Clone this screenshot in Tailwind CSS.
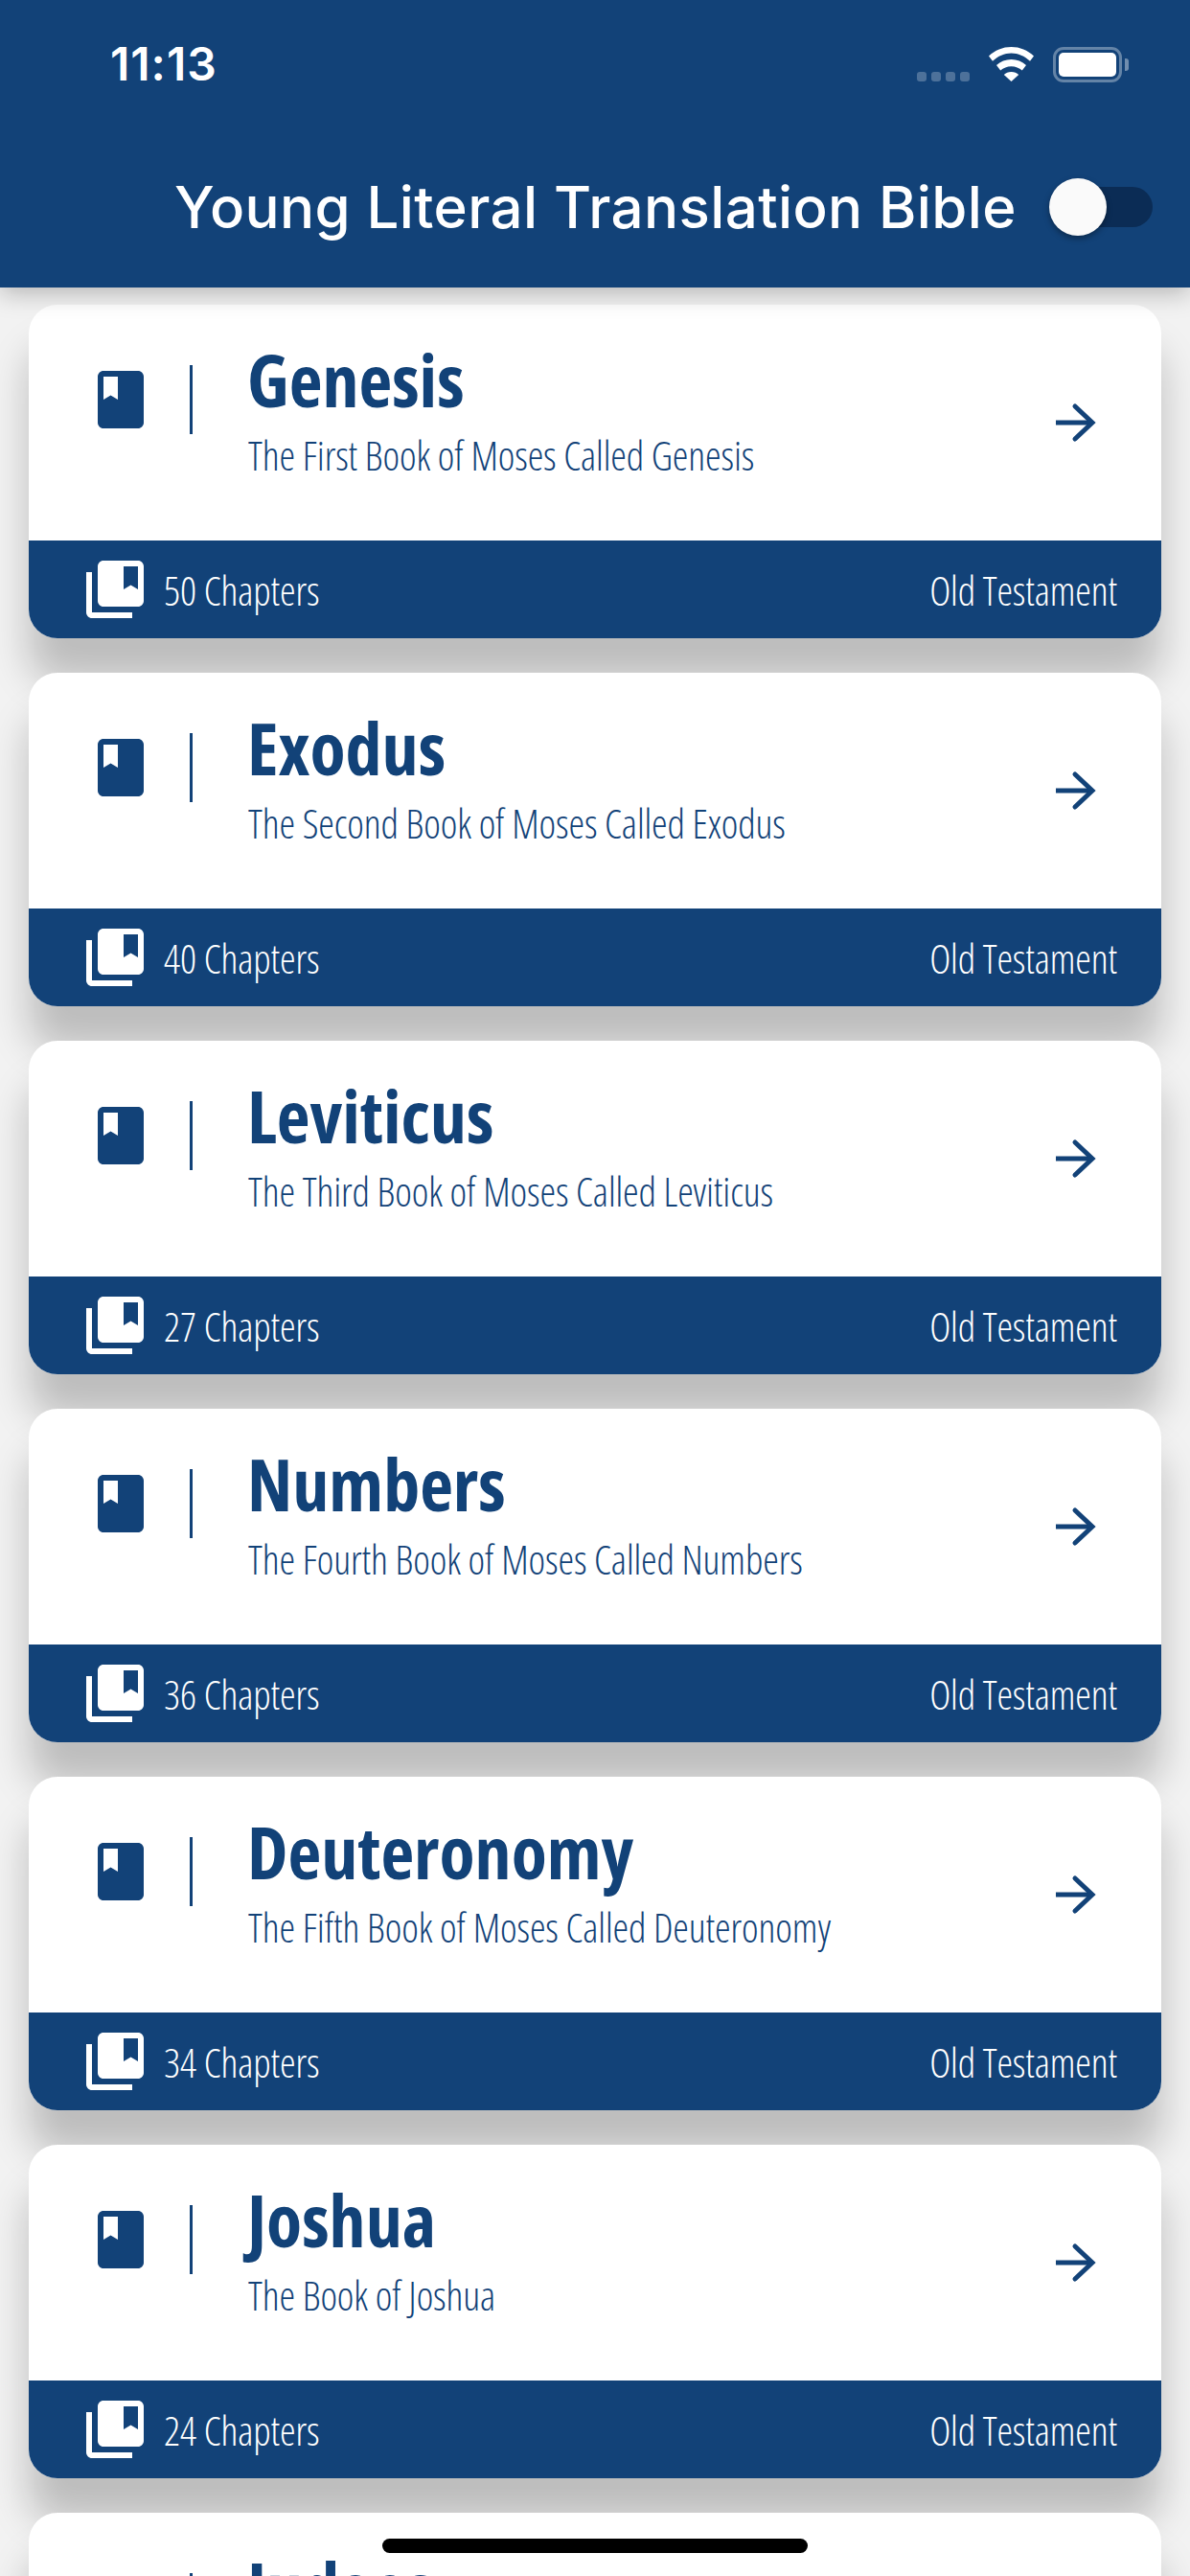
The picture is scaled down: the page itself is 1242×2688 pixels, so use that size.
<!DOCTYPE html>
<html lang="en">
<head>
    <meta charset="UTF-8">
    <meta name="viewport" content="width=device-width, initial-scale=1.0">
    <title>Young Literal Translation Bible</title>
    <script src="https://cdn.jsdelivr.net/npm/@tailwindcss/browser@4"></script>
</head>
<body>
    <div class="relative w-[1242px] h-[2688px] overflow-hidden bg-[#f2f2f2] font-['Open_Sans',sans-serif]">
        <!-- header -->
        <header class="relative z-10 h-[300px] bg-[#124278] text-white shadow-[0_6px_24px_rgba(0,0,0,0.25)]">
            <div class="flex items-center h-[134px] pl-[115px] pr-[64px]">
                <span class="font-['Inter',sans-serif] text-[48px] font-semibold tracking-[1px] leading-none">11:13</span>
                <div class="ml-auto flex items-center">
                    <div class="flex gap-[5px] mt-[26px]">
                        <i class="w-[10px] h-[10px] rounded-[3px] bg-white/25"></i>
                        <i class="w-[10px] h-[10px] rounded-[3px] bg-white/25"></i>
                        <i class="w-[10px] h-[10px] rounded-[3px] bg-white/25"></i>
                        <i class="w-[10px] h-[10px] rounded-[3px] bg-white/25"></i>
                    </div>
                    <svg class="ml-[20px]" width="47" height="36" viewBox="0 0 47 36" fill="white">
                        <path d="M23.500 0C14.500 0 6.500 3.400 0 9.400l4 5.400C9.600 9.700 16.300 6.600 23.500 6.600s13.900 3.100 19.500 8.200l4-5.400C40.500 3.400 32.500 0 23.500 0z"/>
                        <path d="M23.500 13c-6 0-11.300 2.200-15.500 6l4.200 5.600c3-2.700 6.900-4.300 11.300-4.300s8.300 1.600 11.300 4.300L39 19c-4.200-3.800-9.500-6-15.500-6z"/>
                        <path d="M23.500 26c-3.100 0-5.800 1.100-7.700 2.900L23.500 36l7.700-7.100C29.300 27.100 26.600 26 23.500 26z"/>
                    </svg>
                    <div class="ml-[20px] w-[72px] h-[37px] rounded-[11px] border-[3px] border-white/35 p-[3px]">
                        <div class="w-full h-full rounded-[5px] bg-white"></div>
                    </div>
                    <div class="ml-[3px] w-[4px] h-[13px] rounded-r-[3px] bg-white/40"></div>
                </div>
            </div>
            <div class="flex items-center justify-end h-[82px] mt-[41px] pr-[39px]">
                <h1 class="font-['Inter',sans-serif] text-[60px] font-medium tracking-[0.4px] leading-none">Young Literal Translation Bible</h1>
                <div class="relative ml-[40px] w-[102px] h-[42px] rounded-full bg-[#0b2c55]">
                    <div class="absolute left-[-6px] top-[-9px] w-[60px] h-[60px] rounded-full bg-[#fafafa] shadow-[0_3px_6px_rgba(0,0,0,0.35)]"></div>
                </div>
            </div>
        </header>

        <!-- books -->
        <main id="books" class="flex flex-col gap-[36px] px-[30px] pt-[18px]"></main>

        <!-- home indicator -->
        <div class="absolute z-20 left-[399px] top-[2649px] w-[444px] h-[15px] rounded-full bg-black"></div>
    </div>

    <script>
        const books = [
            ["Genesis", "The First Book of Moses Called Genesis", 50],
            ["Exodus", "The Second Book of Moses Called Exodus", 40],
            ["Leviticus", "The Third Book of Moses Called Leviticus", 27],
            ["Numbers", "The Fourth Book of Moses Called Numbers", 36],
            ["Deuteronomy", "The Fifth Book of Moses Called Deuteronomy", 34],
            ["Joshua", "The Book of Joshua", 24],
            ["Judges", "The Book of Judges", 21],
        ]

        document.getElementById("books").innerHTML = books.map(([name, about, chapters]) => `
            <article class="shrink-0 h-[348px] flex flex-col rounded-[30px] bg-white shadow-[0_45px_40px_rgba(0,0,0,0.22)]">
                <div class="flex-1 flex items-start text-[#124278]">
                    <svg class="ml-[60px] mt-[63px]" width="72" height="72" viewBox="0 0 24 24" fill="#124278">
                        <path d="M18 2H6c-1.100 0-2 .9-2 2v16c0 1.100.9 2 2 2h12c1.100 0 2-.9 2-2V4c0-1.100-.9-2-2-2zM6 4h5v8l-2.500-1.500L6 12V4z"/>
                    </svg>
                    <div class="ml-[36px] mt-[63px] w-[3px] h-[72px] bg-[#124278]"></div>
                    <div class="ml-[58px] mt-[26px]">
                        <h2 class="text-[76px] font-bold leading-[104px] -ml-[1px] [font-stretch:75%]">${name}</h2>
                        <p class="text-[42px] font-light leading-[54px] tracking-[-0.12px] [font-stretch:75%]">${about}</p>
                    </div>
                    <svg class="ml-auto mr-[68px] mt-[101px]" width="42" height="44" viewBox="0 0 42 44" fill="none" stroke="#124278" stroke-width="5">
                        <path d="M0 22h37" />
                        <path d="M20 5l18 17-18 17" stroke-linecap="round" />
                    </svg>
                </div>
                <div class="flex items-center h-[102px] pl-[60px] pr-[46px] rounded-b-[30px] bg-[#124278] text-white">
                    <svg class="shrink-0 -ml-[6px]" width="72" height="72" viewBox="0 0 24 24" fill="white">
                        <path d="M4 6H2v14c0 1.100.9 2 2 2h14v-2H4V6zm16-4H8c-1.100 0-2 .9-2 2v12c0 1.100.9 2 2 2h12c1.100 0 2-.9 2-2V4c0-1.100-.9-2-2-2zm0 10l-2.500-1.500L15 12V4h5v8z"/>
                    </svg>
                    <span class="ml-[15px] text-[42px] font-light tracking-[-0.12px] [font-stretch:75%]">${chapters} Chapters</span>
                    <span class="ml-auto text-[42px] font-light tracking-[-0.12px] [font-stretch:75%]">Old Testament</span>
                </div>
            </article>`).join("")
    </script>
</body>
</html>
